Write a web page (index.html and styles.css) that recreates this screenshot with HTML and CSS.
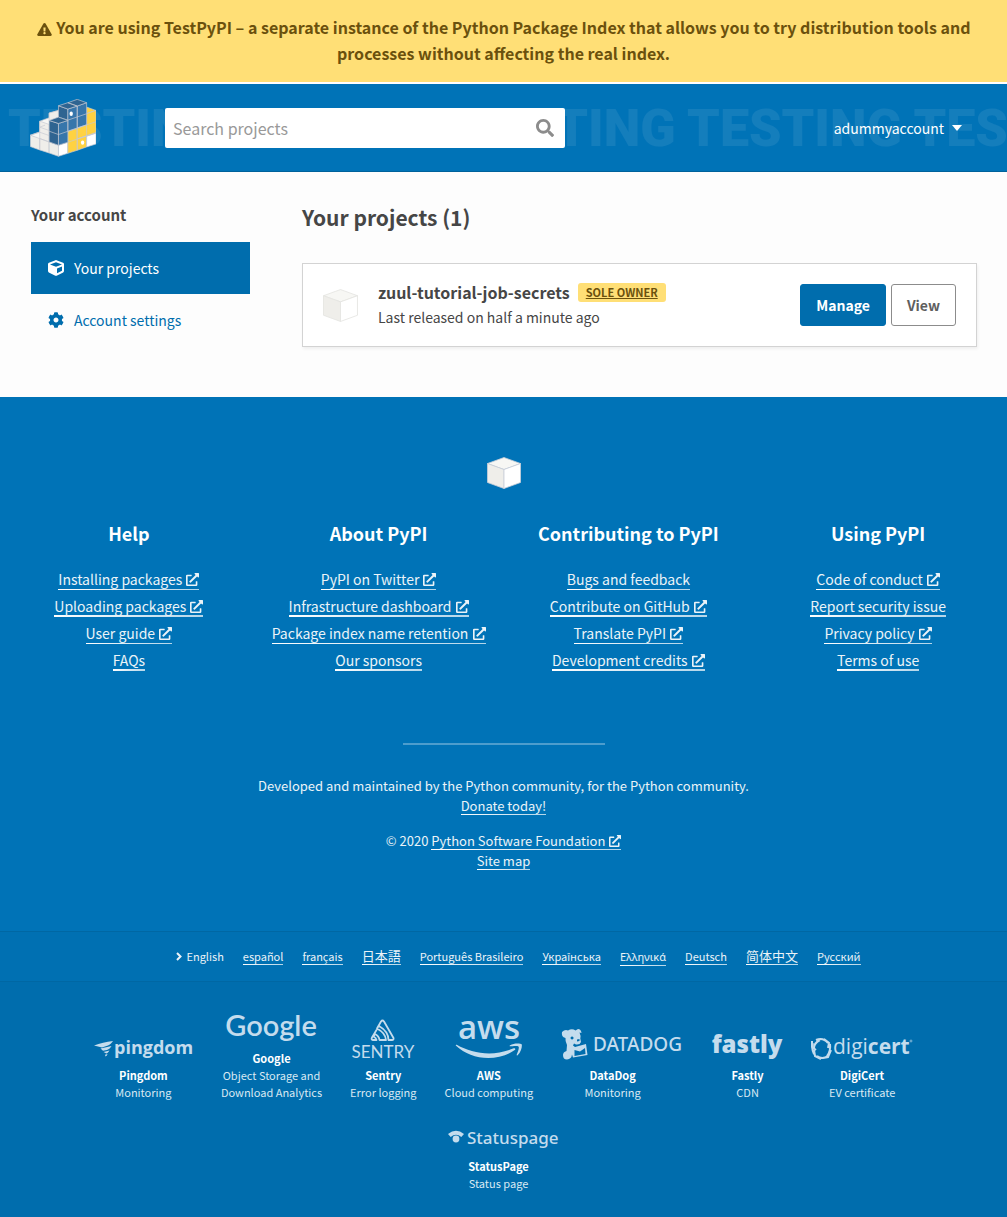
FILE: index.html
```html
<!DOCTYPE html>
<html lang="en">
<head>
<meta charset="utf-8">
<meta name="viewport" content="width=device-width, initial-scale=1">
<title>Your projects · TestPyPI</title>
<link rel="stylesheet" href="styles.css">
</head>
<body>
<svg class="sprite" aria-hidden="true">
  <symbol id="external" viewBox="0 0 512 512"><path d="M432,320H400a16,16,0,0,0-16,16V448H64V128H208a16,16,0,0,0,16-16V80a16,16,0,0,0-16-16H48A48,48,0,0,0,0,112V464a48,48,0,0,0,48,48H400a48,48,0,0,0,48-48V336A16,16,0,0,0,432,320ZM488,0h-128c-21.370,0-32.050,25.910-17,41l35.730,35.730L135,320.370a24,24,0,0,0,0,34L157.670,377a24,24,0,0,0,34,0L435.280,133.320,471,169c15,15,41,4.500,41-17V24A24,24,0,0,0,488,0Z"/></symbol>
  <symbol id="white-cube" viewBox="0 0 34 32"><g stroke-width=".8" stroke-linejoin="round"><path fill="#f7f7f4" d="M17 .5 33.5 6.500 17 12.500.5 6.500z"/><path fill="#efeeea" d="M.5 6.500 17 12.500v19L.5 25.500z"/><path fill="#fff" d="M17 12.500 33.500 6.500v19L17 31.500z"/></g></symbol>
</svg>

<div class="notice">
  <svg class="notice__icon" viewBox="0 0 576 512" aria-hidden="true"><path d="M569.517 440.013C587.975 472.007 564.806 512 527.940 512H48.054c-36.937 0-59.999-40.055-41.577-71.987L246.423 23.985c18.467-32.009 64.720-31.951 83.154 0l239.940 416.028zM288 354c-25.405 0-46 20.595-46 46s20.595 46 46 46 46-20.595 46-46-20.595-46-46-46zm-43.673-165.346l7.418 136c.347 6.364 5.609 11.346 11.982 11.346h48.546c6.373 0 11.635-4.982 11.982-11.346l7.418-136c.375-6.874-5.098-12.654-11.982-12.654h-63.383c-6.884 0-12.356 5.780-11.981 12.654z"/></svg>
  You are using TestPyPI – a separate instance of the Python Package Index that allows you to try distribution tools and processes without affecting the real index.
</div>

<header class="header">
  <div class="header__pattern" aria-hidden="true">TESTING TESTING TESTING TESTING TESTING</div>
  <a class="header__logo" href="#" aria-label="PyPI">
    <svg viewBox="89 296 197 173">
      <g stroke="#c6c9d2" stroke-width="2" stroke-linejoin="round">
        <path fill="#f7f7f4" d="M90 404 118 394V362L146 352V338L174 330V420L146 430z"/>
        <path fill="#efeeea" d="M90 404 118 414V448L90 438zM118 414 146 424V457L118 448zM118 362 146 372V424L118 414zM146 338 174 330V355L146 362z"/>
        <path fill="#efeeea" d="M146 424 174 434V467L146 457z"/>
        <path fill="#fff" d="M174 434 202 425V458L174 467z"/>
        <path fill="#ffd242" d="M202 392 230 383V449L202 458zM230 382 258 373V439L230 449zM258 340 286 330V398L258 407zM258 320 286 330 258 340z"/>
        <path fill="#ffd242" d="M258 340V373L230 383V415L286 398V330z"/>
        <path fill="#fff" d="M258 407 286 398V430L258 439z"/>
        <path fill="#2f6491" d="M146 360 174 369V434L146 424zM174 316 202 326V359L174 350z"/>
        <path fill="#3776ab" d="M174 369 202 360V425L174 434zM202 326 230 317V383L202 392zM230 317 258 307V373L230 382z"/>
        <path fill="#2f6491" d="M174 350 202 360 174 369 146 360zM174 316 202 307 230 317 202 326zM202 307 230 297 258 307 230 317z"/>
        <path fill="none" d="M146 392 174 402 258 373M90 404 118 395 146 405M118 380 146 390M118 380 134 374M202 425 286 397M230 415 286 396M258 373 286 364M202 359 258 340M258 373V407"/>
      </g>
      <ellipse cx="212" cy="340" rx="5" ry="6.500" fill="#fff"/>
      <ellipse cx="246" cy="426" rx="5" ry="6.500" fill="#fff"/>
    </svg>
  </a>
  <form class="search" role="search">
    <input class="search__field" type="search" placeholder="Search projects" aria-label="Search projects">
    <button class="search__button" type="button" aria-label="Search">
      <svg viewBox="0 0 512 512"><path d="M505 442.700L405.300 343c-4.500-4.500-10.600-7-17-7H372c27.600-35.300 44-79.700 44-128C416 93.100 322.900 0 208 0S0 93.100 0 208s93.100 208 208 208c48.300 0 92.700-16.400 128-44v16.300c0 6.400 2.500 12.500 7 17l99.700 99.700c9.400 9.400 24.600 9.400 33.900 0l28.300-28.300c9.400-9.400 9.400-24.600.1-34zM208 336c-70.700 0-128-57.200-128-128 0-70.700 57.200-128 128-128 70.700 0 128 57.200 128 128 0 70.700-57.200 128-128 128z"/></svg>
    </button>
  </form>
  <button class="account" type="button">adummyaccount
    <svg class="account__caret" viewBox="0 0 10 6" aria-hidden="true"><path d="M0 0h10L5 6z"/></svg>
  </button>
</header>

<main class="main">
  <aside class="sidebar">
    <h2 class="sidebar__title">Your account</h2>
    <nav class="tabs">
      <a class="tabs__item tabs__item--active" href="#">
        <svg viewBox="0 0 512 512" aria-hidden="true"><path d="M239.100 6.300l-208 78c-18.700 7-31.100 25-31.100 45v225.100c0 18.200 10.300 34.800 26.500 42.900l208 104c13.500 6.800 29.400 6.800 42.900 0l208-104c16.300-8.100 26.500-24.800 26.500-42.900V129.300c0-20-12.400-37.900-31.100-44.900l-208-78C262 2.200 250 2.200 239.100 6.300zM256 68.400l192 72v1.100l-192 78-192-78v-1.100l192-72zm32 356V275.500l160-65v133.900l-160 80z"/></svg>
        Your projects</a>
      <a class="tabs__item" href="#">
        <svg viewBox="0 0 512 512" aria-hidden="true"><path d="M487.400 315.700l-42.600-24.600c4.300-23.200 4.300-47 0-70.200l42.600-24.600c4.900-2.800 7.100-8.600 5.500-14-11.100-35.600-30-67.800-54.700-94.600-3.800-4.100-10-5.100-14.800-2.300L380.800 110c-17.900-15.400-38.500-27.300-60.800-35.100V25.800c0-5.600-3.900-10.500-9.400-11.700-36.700-8.200-74.300-7.800-109.200 0-5.500 1.200-9.400 6.100-9.400 11.700V75c-22.200 7.900-42.800 19.800-60.800 35.100L88.700 85.500c-4.900-2.800-11-1.900-14.800 2.300-24.700 26.700-43.600 58.900-54.700 94.600-1.700 5.400.6 11.200 5.500 14L67.300 221c-4.300 23.200-4.300 47 0 70.200l-42.600 24.600c-4.900 2.800-7.100 8.600-5.500 14 11.100 35.600 30 67.800 54.700 94.600 3.800 4.100 10 5.100 14.800 2.300l42.600-24.600c17.900 15.400 38.500 27.300 60.800 35.100v49.200c0 5.600 3.900 10.500 9.400 11.700 36.700 8.200 74.300 7.800 109.200 0 5.500-1.200 9.400-6.100 9.400-11.700v-49.200c22.200-7.900 42.800-19.800 60.800-35.100l42.600 24.600c4.900 2.800 11 1.900 14.800-2.300 24.700-26.700 43.600-58.900 54.700-94.600 1.500-5.500-.7-11.300-5.600-14.100zM256 336c-44.100 0-80-35.900-80-80s35.900-80 80-80 80 35.900 80 80-35.900 80-80 80z"/></svg>
        Account settings</a>
    </nav>
  </aside>
  <section class="content">
    <h1 class="content__title">Your projects (1)</h1>
    <article class="package">
      <svg class="package__icon" aria-hidden="true"><use href="#white-cube"/></svg>
      <div class="package__body">
        <h3 class="package__title">zuul-tutorial-job-secrets <a class="badge" href="#">SOLE OWNER</a></h3>
        <p class="package__meta">Last released on half a minute ago</p>
      </div>
      <div class="package__actions">
        <button class="button button--primary" type="button">Manage</button>
        <button class="button" type="button">View</button>
      </div>
    </article>
  </section>
</main>

<footer class="footer">
  <svg class="footer__cube" aria-hidden="true"><use href="#white-cube"/></svg>
  <div class="menus">
    <nav class="menu">
      <h2>Help</h2>
      <ul>
        <li><a href="#">Installing packages <svg class="ext"><use href="#external"/></svg></a></li>
        <li><a href="#">Uploading packages <svg class="ext"><use href="#external"/></svg></a></li>
        <li><a href="#">User guide <svg class="ext"><use href="#external"/></svg></a></li>
        <li><a href="#">FAQs</a></li>
      </ul>
    </nav>
    <nav class="menu">
      <h2>About PyPI</h2>
      <ul>
        <li><a href="#">PyPI on Twitter <svg class="ext"><use href="#external"/></svg></a></li>
        <li><a href="#">Infrastructure dashboard <svg class="ext"><use href="#external"/></svg></a></li>
        <li><a href="#">Package index name retention <svg class="ext"><use href="#external"/></svg></a></li>
        <li><a href="#">Our sponsors</a></li>
      </ul>
    </nav>
    <nav class="menu">
      <h2>Contributing to PyPI</h2>
      <ul>
        <li><a href="#">Bugs and feedback</a></li>
        <li><a href="#">Contribute on GitHub <svg class="ext"><use href="#external"/></svg></a></li>
        <li><a href="#">Translate PyPI <svg class="ext"><use href="#external"/></svg></a></li>
        <li><a href="#">Development credits <svg class="ext"><use href="#external"/></svg></a></li>
      </ul>
    </nav>
    <nav class="menu">
      <h2>Using PyPI</h2>
      <ul>
        <li><a href="#">Code of conduct <svg class="ext"><use href="#external"/></svg></a></li>
        <li><a href="#">Report security issue</a></li>
        <li><a href="#">Privacy policy <svg class="ext"><use href="#external"/></svg></a></li>
        <li><a href="#">Terms of use</a></li>
      </ul>
    </nav>
  </div>
  <hr class="footer__divider">
  <div class="legal">
    <p>Developed and maintained by the Python community, for the Python community.<br><a href="#">Donate today!</a></p>
    <p>© 2020 <a href="#">Python Software Foundation <svg class="ext"><use href="#external"/></svg></a><br><a href="#">Site map</a></p>
  </div>
</footer>

<nav class="languages" aria-label="Language">
  <button class="languages__current" type="button"><svg viewBox="0 0 6 9" aria-hidden="true"><path d="M1 1l3.500 3.500L1 8" fill="none" stroke="currentColor" stroke-width="2"/></svg>English</button>
  <a href="#" lang="es">español</a>
  <a href="#" lang="fr">français</a>
  <a href="#" lang="ja">日本語</a>
  <a href="#" lang="pt">Português Brasileiro</a>
  <a href="#" lang="uk">Українська</a>
  <a href="#" lang="el">Ελληνικά</a>
  <a href="#" lang="de">Deutsch</a>
  <a href="#" lang="zh">简体中文</a>
  <a href="#" lang="ru">Русский</a>
</nav>

<section class="sponsors" aria-label="Sponsors">
  <a class="sponsor" href="#">
    <svg class="sponsor__logo" width="99" height="21" viewBox="0 0 99 21"><path d="M0 6.500C6 4 12 3 19 2c-1.500 2.500-3 3.500-5 4.500L8 8.500zM6.500 9.500 17.500 7c-1 2-2.500 3-4.500 4l-4 .8zM9.500 13l6-1.500c-1 1.500-1.500 2.200-3 3zM11 15.800l2.500-.8c-.5 1.500-1 2-2 2.500z"/><text class="wordmark wordmark--pingdom" x="20" y="15">pingdom</text></svg>
    <strong>Pingdom</strong>Monitoring</a>
  <a class="sponsor" href="#">
    <svg class="sponsor__logo" width="96" height="32" viewBox="0 0 96 32"><text class="wordmark wordmark--google" x="48" y="25" text-anchor="middle">Google</text></svg>
    <strong>Google</strong>Object Storage and<br>Download Analytics</a>
  <a class="sponsor" href="#">
    <svg class="sponsor__logo" width="66" height="41" viewBox="0 0 66 41"><path fill="none" stroke="currentColor" stroke-width="1.800" stroke-linejoin="round" stroke-linecap="round" d="M27 9.500 31 2.500q1.500-2 3 0L43.500 19q.5 2-1.500 2h-3.500Q38.500 12.500 29 7M27 9.500Q35.500 14 36 21h-6.500q-.5-4-4.500-6l-1.500 2.500q2.500 1.200 3 3.500h-4Q21 20.500 22 18.500L26.500 11"/><text class="wordmark wordmark--sentry" x="33" y="39" text-anchor="middle">SENTRY</text></svg>
    <strong>Sentry</strong>Error logging</a>
  <a class="sponsor" href="#">
    <svg class="sponsor__logo" width="66" height="41" viewBox="0 0 66 41"><text class="wordmark wordmark--aws" x="33" y="20" text-anchor="middle">aws</text><path transform="translate(.6 -18.500) scale(2.720)" d="M21.384 18.201c-2.626 1.940-6.442 2.969-9.722 2.969-4.598 0-8.740-1.700-11.870-4.526-.247-.223-.024-.527.272-.351 3.384 1.963 7.559 3.153 11.877 3.153 2.914 0 6.114-.607 9.060-1.852.439-.2.814.287.383.607zM22.792 16.961c-.336-.43-2.220-.207-3.074-.103-.255.032-.295-.192-.063-.36 1.500-1.053 3.967-.75 4.254-.399.287.36-.08 2.826-1.485 4.007-.215.184-.423.088-.327-.151.320-.79 1.030-2.570.695-2.994z"/></svg>
    <strong>AWS</strong>Cloud computing</a>
  <a class="sponsor" href="#">
    <svg class="sponsor__logo" width="123" height="31" viewBox="0 0 123 31"><path fill-rule="evenodd" d="M1 3q3-3 6-1.500Q11-1 14.500 1.500L17 0q3 0 3.500 4l-2-.5q1.500 3 .8 6L20 13q-1 3-5 2.500l-2-1-1 2 2 1.500 11-3L26.500 26 12 28.500l-1-3q-.5 4.500-5 5Q2 30.500 2 26q0-3 3.500-4L6 16q-2-4-1.500-7Q0 8 1 3zM11 7.500a1.500 1.500 0 1 0 .1 0zM16 10.500v2l2.500-.5v-2zM13.500 21v6l11-2-.5-6-5 3.500z"/><text class="wordmark wordmark--datadog" x="32" y="22">DATADOG</text></svg>
    <span class="sponsor__text sponsor__text--wide"><strong>DataDog</strong>Monitoring</span></a>
  <a class="sponsor" href="#">
    <svg class="sponsor__logo" width="71" height="28" viewBox="0 0 71 28"><text class="wordmark wordmark--fastly" x="35" y="21" text-anchor="middle">fastly</text></svg>
    <strong>Fastly</strong>CDN</a>
  <a class="sponsor" href="#">
    <svg class="sponsor__logo" width="102" height="22" viewBox="0 0 102 22"><path fill="none" stroke="currentColor" stroke-width="2" d="M9 2Q3 5 3 10M1 3v6l4 3M5 2Q12-1 17 5M13 1l5 4-1 5M19 6q1 7-3 12M20 12l-3 7-5 1M17 18q-6 4-11 0M10 21l-6-3-1-6M3 16Q0 10 2 5"/><text class="wordmark wordmark--digicert" x="22" y="16">digi<tspan font-weight="700">cert</tspan></text><circle cx="100" cy="3" r="1" fill="none" stroke="currentColor" stroke-width=".6"/></svg>
    <strong>DigiCert</strong>EV certificate</a>
  <a class="sponsor" href="#">
    <svg class="sponsor__logo" width="111" height="22" viewBox="0 0 111 22"><circle cx="8" cy="10" r="3.400"/><path d="M0 5Q8-1.500 16 5L13.300 8Q8 3.500 2.700 8z"/><text class="wordmark wordmark--statuspage" x="19" y="15">Statuspage</text></svg>
    <span class="sponsor__text"><strong>StatusPage</strong>Status page</span></a>
</section>
</body>
</html>
```
FILE: styles.css
```css
* { box-sizing: border-box; }

body {
  margin: 0;
  background: #006dad;
  color: #464646;
  font-family: "Noto Sans CJK SC", "Noto Sans", sans-serif;
  font-size: 14px;
  line-height: 24px;
}

h1, h2, h3, p, ul { margin: 0; padding: 0; }
h1, h2, h3, strong { font-weight: 600; }
ul { list-style: none; }
a { color: inherit; text-decoration: none; }
button { font: inherit; color: inherit; cursor: pointer; }
svg { fill: currentColor; }

.sprite { position: absolute; width: 0; height: 0; }

/* Notice */
.notice {
  padding: 14px 30px 16px;
  border-bottom: 2px solid #fff;
  background: #ffdf76;
  background-clip: padding-box;
  color: #6b510d;
  font-size: 16px;
  font-weight: 600;
  line-height: 26px;
  text-align: center;
}
.notice__icon { width: 15px; height: 13px; margin-right: 1px; vertical-align: -2px; }

/* Header */
.header {
  position: relative;
  display: flex;
  align-items: center;
  padding: 15px 30px 14px;
  min-height: 88px;
  overflow: hidden;
  border-bottom: 1px solid #00629b;
  background: #0073b7;
  color: #fff;
}
.header__pattern {
  position: absolute;
  top: 15px;
  left: 8px;
  color: rgba(255, 255, 255, .08);
  font: 900 52px/60px Roboto, sans-serif;
  white-space: nowrap;
}
.header__logo { position: relative; width: 66px; height: 58px; }
.header__logo svg { display: block; width: 100%; height: 100%; }
.search {
  position: relative;
  display: flex;
  flex: 0 1 400px;
  margin-left: 69px;
  border-radius: 2px;
  background: #fff;
}
.search__field {
  flex: 1;
  min-width: 0;
  height: 40px;
  padding: 0 8px;
  border: 0;
  background: none;
  color: #464646;
  font: inherit;
  font-size: 16px;
}
.search__field::placeholder { color: #999; opacity: 1; }
.search__button { display: flex; align-items: center; padding: 0 11px; border: 0; background: none; color: #8c8c8c; }
.search__button svg { width: 18px; height: 18px; }
.account {
  position: relative;
  display: flex;
  align-items: center;
  gap: 8px;
  margin-left: auto;
  padding: 0 15px;
  border: 0;
  background: none;
}
.account__caret { width: 10px; height: 6px; }

/* Main */
.main {
  display: grid;
  grid-template-columns: 219px 1fr;
  gap: 52px;
  padding: 30px 30px 50px 31px;
  background: #fdfdfd;
}
.sidebar__title { margin-bottom: 14px; font-size: 15px; line-height: 26px; }
.tabs__item {
  display: flex;
  align-items: center;
  gap: 10px;
  padding: 14px 17px;
  color: #006dad;
}
.tabs__item--active { background: #006dad; color: #fff; }
.tabs__item svg { width: 16px; height: 16px; }
.content__title { margin-bottom: 31px; font-size: 21px; line-height: 30px; }
.package {
  display: flex;
  align-items: center;
  gap: 20px;
  padding: 15px 20px;
  border: 1px solid #d3d3d3;
  background: #fff;
  box-shadow: 1px 2px 3px rgba(0, 0, 0, .06);
}
.package__icon { flex: none; width: 35px; height: 33px; stroke: #e4e4e1; }
.package__body { flex: 1; padding-bottom: 2px; }
.package__title { display: flex; align-items: center; gap: 8px; font-size: 16px; line-height: 26px; }
.badge {
  padding: 0 8px;
  border-radius: 3px;
  background: #ffdf76;
  color: #6b510d;
  font-size: 11px;
  line-height: 19px;
  text-decoration: underline;
}
.package__actions { display: flex; gap: 5px; }
.button {
  height: 42px;
  padding: 0 15px;
  border: 1px solid #8c8c8c;
  border-radius: 3px;
  background: #fff;
  color: #5f5f5f;
  font-weight: 600;
}
.button--primary { border-color: #006dad; background: #006dad; color: #fff; }

/* Footer */
.footer { padding: 60px 4px; background: #0073b7; color: #ebf3f8; text-align: center; }
.footer__cube { display: block; width: 34px; height: 32px; margin: 0 auto 29px; stroke: #c9ced8; }
.menus { display: grid; grid-template-columns: repeat(4, 1fr); }
.menu h2 { margin-bottom: 18px; color: #fff; font-size: 18px; line-height: 30px; }
.menu li { line-height: 27px; }
.footer a, .languages a {
  padding-bottom: 1px;
  border-bottom: 1px solid;
  border-image: linear-gradient(to right, #fff, rgba(255, 255, 255, .7)) 1;
}
.menu a { display: inline-block; line-height: 18px; }
.menu li:nth-child(even) a { padding-bottom: 0; border-bottom-width: 2px; }
.ext { width: 13px; height: 13px; margin-left: 1px; vertical-align: -1px; }
.footer__divider { width: 202px; height: 2px; margin: 69px auto 31px; border: 0; background: #4d9dcd; }
.legal { font-size: 13px; line-height: 20px; }
.legal p + p { margin-top: 15px; }
.legal a { display: inline-block; line-height: 16px; padding: 0; }
.legal .ext { width: 12px; height: 12px; }

/* Languages */
.languages {
  display: flex;
  flex-wrap: wrap;
  align-items: baseline;
  justify-content: center;
  gap: 19px;
  padding: 16px 15px 15px 45px;
  border: solid #0067a3;
  border-width: 1px 0;
  background: #0070b2;
  color: #ebf3f8;
  font-size: 11px;
  line-height: 16px;
}
.languages a { padding: 0; }
.languages :lang(ja), .languages :lang(zh) { font-size: 13px; }
.languages :lang(el) { font-family: "Noto Sans", sans-serif; }
.languages__current { display: flex; align-items: baseline; gap: 4px; padding: 0; border: 0; background: none; }
.languages__current svg { width: 6px; height: 9px; }

/* Sponsors */
.sponsors {
  display: flex;
  flex-wrap: wrap;
  align-items: flex-end;
  justify-content: center;
  gap: 28px;
  padding: 29px 80px 24px;
  color: #d9e9f3;
  font-size: 11px;
  line-height: 17px;
  text-align: center;
}
.sponsor { display: flex; flex-direction: column; align-items: center; }
.sponsor strong { display: block; color: #fff; }
.sponsor__logo { margin-bottom: 7px; overflow: visible; color: #c4dced; }
.sponsor__text { margin-right: 10px; }
.sponsor__text--wide { margin-right: 20px; }
.wordmark { fill: currentColor; }
.wordmark--pingdom { font: 700 18px "Open Sans", sans-serif; }
.wordmark--google { font: 600 29px Lato, sans-serif; }
.wordmark--sentry { font: 400 17px Lato, sans-serif; }
.wordmark--aws { font: 600 33px "Open Sans", sans-serif; }
.wordmark--datadog { font: 500 19px "Noto Sans", sans-serif; }
.wordmark--fastly { font: 800 24px "Open Sans", sans-serif; }
.wordmark--digicert { font: 400 21px "Open Sans", sans-serif; }
.wordmark--statuspage { font: 500 17px "Noto Sans", sans-serif; }
```
